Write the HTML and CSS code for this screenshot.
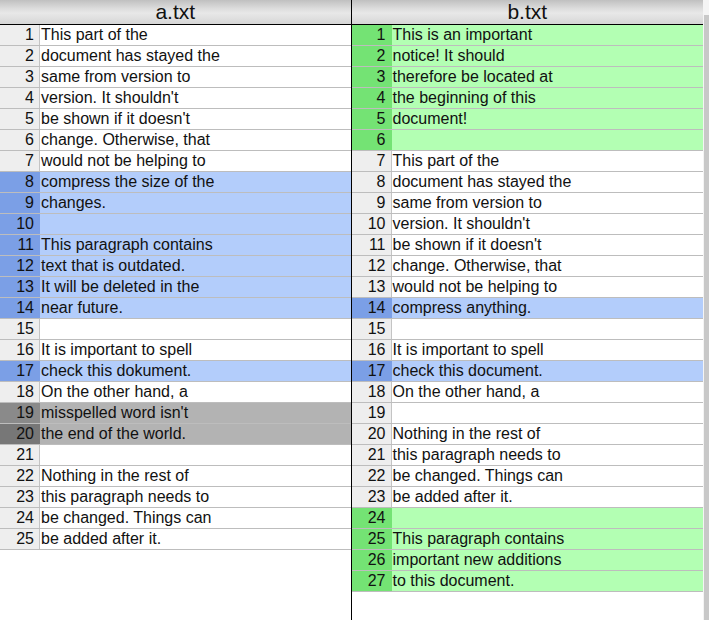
FILE: index.html
```html
<!DOCTYPE html>
<html>
<head>
<meta charset="utf-8">
<link rel="stylesheet" href="styles.css">
</head>
<body>
<div class="app">
  <section class="pane pane-left">
    <header class="pane-head">a.txt</header>
    <div class="rows">
      <div class="row"><span class="ln">1</span><span class="tx">This part of the</span></div>
      <div class="row"><span class="ln">2</span><span class="tx">document has stayed the</span></div>
      <div class="row"><span class="ln">3</span><span class="tx">same from version to</span></div>
      <div class="row"><span class="ln">4</span><span class="tx">version. It shouldn't</span></div>
      <div class="row"><span class="ln">5</span><span class="tx">be shown if it doesn't</span></div>
      <div class="row"><span class="ln">6</span><span class="tx">change. Otherwise, that</span></div>
      <div class="row"><span class="ln">7</span><span class="tx">would not be helping to</span></div>
      <div class="row chg"><span class="ln">8</span><span class="tx">compress the size of the</span></div>
      <div class="row chg"><span class="ln">9</span><span class="tx">changes.</span></div>
      <div class="row chg"><span class="ln">10</span><span class="tx"></span></div>
      <div class="row chg"><span class="ln">11</span><span class="tx">This paragraph contains</span></div>
      <div class="row chg"><span class="ln">12</span><span class="tx">text that is outdated.</span></div>
      <div class="row chg"><span class="ln">13</span><span class="tx">It will be deleted in the</span></div>
      <div class="row chg"><span class="ln">14</span><span class="tx">near future.</span></div>
      <div class="row"><span class="ln">15</span><span class="tx"></span></div>
      <div class="row"><span class="ln">16</span><span class="tx">It is important to spell</span></div>
      <div class="row chg"><span class="ln">17</span><span class="tx">check this dokument.</span></div>
      <div class="row"><span class="ln">18</span><span class="tx">On the other hand, a</span></div>
      <div class="row del"><span class="ln">19</span><span class="tx">misspelled word isn't</span></div>
      <div class="row del del-b"><span class="ln">20</span><span class="tx">the end of the world.</span></div>
      <div class="row"><span class="ln">21</span><span class="tx"></span></div>
      <div class="row"><span class="ln">22</span><span class="tx">Nothing in the rest of</span></div>
      <div class="row"><span class="ln">23</span><span class="tx">this paragraph needs to</span></div>
      <div class="row"><span class="ln">24</span><span class="tx">be changed. Things can</span></div>
      <div class="row"><span class="ln">25</span><span class="tx">be added after it.</span></div>
    </div>
  </section>
  <section class="pane pane-right">
    <header class="pane-head">b.txt</header>
    <div class="rows">
      <div class="row add"><span class="ln">1</span><span class="tx">This is an important</span></div>
      <div class="row add"><span class="ln">2</span><span class="tx">notice! It should</span></div>
      <div class="row add"><span class="ln">3</span><span class="tx">therefore be located at</span></div>
      <div class="row add"><span class="ln">4</span><span class="tx">the beginning of this</span></div>
      <div class="row add"><span class="ln">5</span><span class="tx">document!</span></div>
      <div class="row add"><span class="ln">6</span><span class="tx"></span></div>
      <div class="row"><span class="ln">7</span><span class="tx">This part of the</span></div>
      <div class="row"><span class="ln">8</span><span class="tx">document has stayed the</span></div>
      <div class="row"><span class="ln">9</span><span class="tx">same from version to</span></div>
      <div class="row"><span class="ln">10</span><span class="tx">version. It shouldn't</span></div>
      <div class="row"><span class="ln">11</span><span class="tx">be shown if it doesn't</span></div>
      <div class="row"><span class="ln">12</span><span class="tx">change. Otherwise, that</span></div>
      <div class="row"><span class="ln">13</span><span class="tx">would not be helping to</span></div>
      <div class="row chg"><span class="ln">14</span><span class="tx">compress anything.</span></div>
      <div class="row"><span class="ln">15</span><span class="tx"></span></div>
      <div class="row"><span class="ln">16</span><span class="tx">It is important to spell</span></div>
      <div class="row chg"><span class="ln">17</span><span class="tx">check this document.</span></div>
      <div class="row"><span class="ln">18</span><span class="tx">On the other hand, a</span></div>
      <div class="row"><span class="ln">19</span><span class="tx"></span></div>
      <div class="row"><span class="ln">20</span><span class="tx">Nothing in the rest of</span></div>
      <div class="row"><span class="ln">21</span><span class="tx">this paragraph needs to</span></div>
      <div class="row"><span class="ln">22</span><span class="tx">be changed. Things can</span></div>
      <div class="row"><span class="ln">23</span><span class="tx">be added after it.</span></div>
      <div class="row add"><span class="ln">24</span><span class="tx"></span></div>
      <div class="row add"><span class="ln">25</span><span class="tx">This paragraph contains</span></div>
      <div class="row add"><span class="ln">26</span><span class="tx">important new additions</span></div>
      <div class="row add"><span class="ln">27</span><span class="tx">to this document.</span></div>
    </div>
  </section>
  <div class="scroll"><div class="scroll-thumb"></div></div>
</div>
</body>
</html>
```
FILE: styles.css
```css
html, body {
  margin: 0;
  padding: 0;
  background: #ffffff;
}
.app {
  display: flex;
  height: 620px;
  width: 709px;
  overflow: hidden;
  font-family: "Liberation Sans", Arial, sans-serif;
  font-size: 16px;
  color: #111;
}
.pane {
  display: flex;
  flex-direction: column;
  background: #fff;
}
.pane-left {
  width: 351px;
  border-right: 1px solid #000;
}
.pane-right {
  width: 352px;
}
.pane-head {
  height: 24px;
  line-height: 24px;
  border-bottom: 1px solid #000;
  text-align: center;
  font-size: 21px;
  color: #111;
  background: linear-gradient(#c0c0c0 0%, #dcdcdc 35%, #e8e8e8 55%, #d6d6d6 100%);
}
.rows {
  display: flex;
  flex-direction: column;
}
.row {
  display: grid;
  grid-template-columns: 40px 1fr;
  height: 20px;
  line-height: 20px;
  border-bottom: 1px solid #bdbdbd;
  background: #fff;
}
.ln {
  background: #eeeeee;
  border-right: 1px solid #c4c4c4;
  text-align: right;
  padding-right: 5px;
  white-space: nowrap;
}
.tx {
  padding-left: 1px;
  white-space: nowrap;
  overflow: hidden;
}
.chg .tx { background: #b3cdfb; }
.chg .ln { background: #7b9fe6; border-right-color: #7b9fe6; }
.add .tx { background: #b3ffb3; }
.add .ln { background: #74e374; border-right-color: #74e374; }
.del .tx { background: #b3b3b3; }
.del .ln { background: #8a8a8a; border-right-color: #8a8a8a; }
.del-b .ln { background: #777777; border-right-color: #777777; }
.scroll {
  width: 6px;
  display: flex;
  flex-direction: column;
  background: #f4f4f4;
  padding-top: 15px;
  box-sizing: border-box;
}
.scroll-thumb {
  margin-left: 1px;
  flex: 1;
  background: #c8c8c8;
}
```
